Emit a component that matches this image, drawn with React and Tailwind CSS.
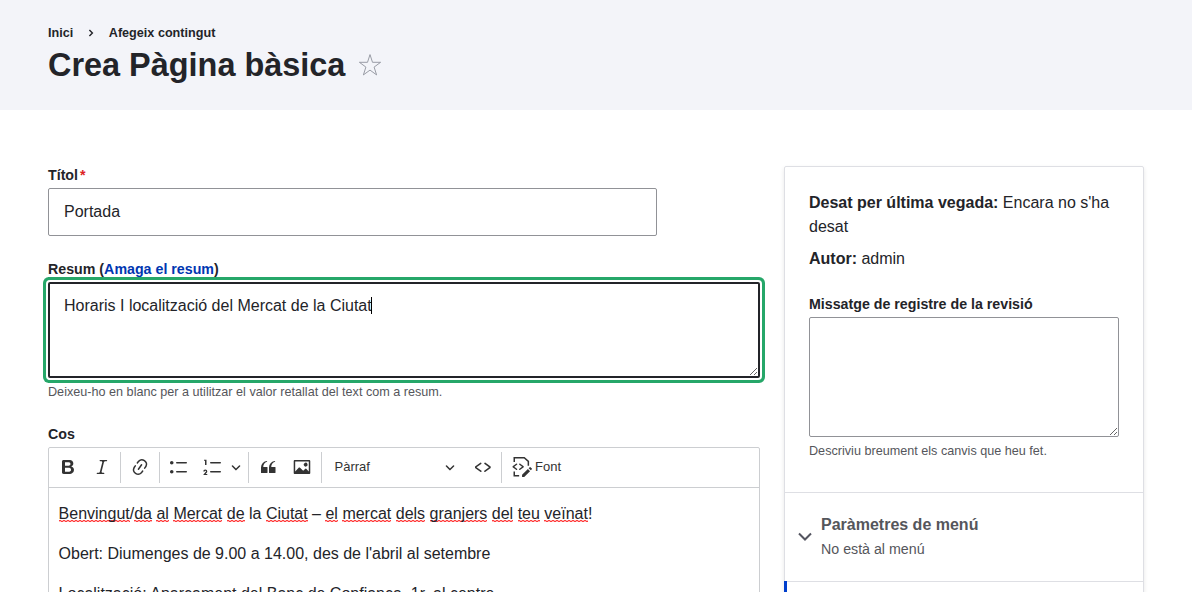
import React from "react";

const ICONS = {
  bold: "M10.187 17H5.773c-.637 0-1.092-.138-1.364-.415-.273-.277-.409-.718-.409-1.323V4.738c0-.617.14-1.062.419-1.332.279-.27.73-.406 1.354-.406h4.68c.69 0 1.288.041 1.793.124.506.083.96.242 1.36.477.341.197.644.447.906.75a3.262 3.262 0 0 1 .808 2.162c0 1.401-.722 2.426-2.167 3.075C15.05 10.175 16 11.315 16 13.01a3.756 3.756 0 0 1-2.296 3.504 6.1 6.1 0 0 1-1.517.377c-.571.073-1.238.11-2 .11zm-.217-6.217H7v4.087h3.069c1.977 0 2.965-.69 2.965-2.072 0-.707-.256-1.22-.768-1.537-.512-.319-1.277-.478-2.296-.478zM7 5.13v3.619h2.606c.729 0 1.292-.067 1.69-.2a1.6 1.6 0 0 0 .91-.765c.165-.267.247-.566.247-.897 0-.707-.26-1.176-.778-1.409-.519-.232-1.31-.348-2.375-.348H7z",
  italic: "m9.586 14.633.021.004c-.036.335.095.655.393.962.082.083.173.15.274.201h1.474a.6.6 0 1 1 0 1.2H5.304a.6.6 0 0 1 0-1.2h1.15c.474-.07.809-.182 1.005-.334.157-.122.291-.32.404-.597l2.416-9.55a1.053 1.053 0 0 0-.281-.823 1.12 1.12 0 0 0-.442-.296H8.15a.6.6 0 0 1 0-1.2h6.443a.6.6 0 1 1 0 1.2h-1.195c-.376.056-.65.155-.823.296-.215.175-.423.439-.623.79l-2.366 9.347z",
  link: "m11.077 15 .991-1.416a.75.75 0 1 1 1.229.86l-1.148 1.64a.748.748 0 0 1-.217.206 5.251 5.251 0 0 1-8.503-5.955.741.741 0 0 1 .12-.274l1.147-1.639a.75.75 0 1 1 1.228.86L4.933 10.7l.006.003a3.75 3.75 0 0 0 6.132 4.294l.006.004zm5.494-5.335a.748.748 0 0 1-.12.274l-1.147 1.639a.75.75 0 1 1-1.228-.86l.86-1.23a3.75 3.75 0 0 0-6.144-4.301l-.86 1.229a.75.75 0 0 1-1.229-.86l1.148-1.64a.748.748 0 0 1 .217-.206 5.251 5.251 0 0 1 8.503 5.955zm-4.563-2.532a.75.75 0 0 1 .184 1.045l-3.155 4.505a.75.75 0 1 1-1.229-.86l3.155-4.506a.75.75 0 0 1 1.045-.184z",
  bulleted: "M7 5.75c0 .414.336.75.75.75h9.5a.75.75 0 1 0 0-1.5h-9.5a.75.75 0 0 0-.75.75zm-6 0C1 4.784 1.777 4 2.75 4c.966 0 1.75.777 1.75 1.75 0 .966-.777 1.75-1.75 1.75C1.784 7.5 1 6.723 1 5.75zm6 9c0 .414.336.75.75.75h9.5a.75.75 0 1 0 0-1.5h-9.5a.75.75 0 0 0-.75.75zm-6 0c0-.966.777-1.75 1.75-1.75.966 0 1.75.777 1.75 1.75 0 .966-.777 1.75-1.75 1.75-.966 0-1.75-.777-1.75-1.75z",
  numbered: "M7 5.75c0 .414.336.75.75.75h9.5a.75.75 0 1 0 0-1.5h-9.5a.75.75 0 0 0-.75.75zM3.5 3v5H2V3.7H1v-1h2.5V3zM.343 17.857l2.59-3.257H2.92a.6.6 0 1 0-1.04 0H.302a2 2 0 1 1 3.995 0h-.001c-.048.405-.16.734-.333.988-.175.254-.59.692-1.244 1.312H4.3v1h-4l.043-.043zM7 14.75a.75.75 0 0 1 .75-.75h9.5a.75.75 0 1 1 0 1.5h-9.5a.75.75 0 0 1-.75-.75z",
  quote: "M3 10.423a6.5 6.5 0 0 1 6.056-6.408l.038.67C6.448 5.423 5.354 7.663 5.22 10H9c.552 0 .5.432.5.986v4.511c0 .554-.448.503-1 .503h-5c-.552 0-.5-.449-.5-1.003v-4.574zm8 0a6.5 6.5 0 0 1 6.056-6.408l.038.67c-2.646.739-3.74 2.979-3.873 5.315H17c.552 0 .5.432.5.986v4.511c0 .554-.448.503-1 .503h-5c-.552 0-.5-.449-.5-1.003v-4.574z",
  image: "M6.91 10.54c.26-.23.64-.21.88.03l3.36 3.14 2.23-2.06a.64.64 0 0 1 .87 0l2.52 2.97V4.5H3.2v10.12l3.71-4.08zm10.27-7.51c.6 0 1.09.47 1.09 1.05v11.84c0 .59-.49 1.06-1.09 1.06H2.79c-.6 0-1.09-.47-1.09-1.06V4.08c0-.58.49-1.05 1.1-1.05h14.38zm-5.22 5.56a1.96 1.96 0 1 1 3.4-1.96 1.96 1.96 0 0 1-3.4 1.96z",
  code: "m12.5 5.7 5.2 3.9v1.3l-5.6 4c-.1.2-.3.2-.5.2-.3-.1-.6-.7-.6-1l.3-.4 4.7-3.5L11.5 7l-.2-.2c-.1-.3-.1-.6 0-.8.2-.2.5-.4.8-.4a.8.8 0 0 1 .4.1zm-5.2 0L2 9.6v1.3l5.6 4c.1.2.3.2.5.2.3-.1.7-.7.6-1 0-.1 0-.3-.2-.4l-5-3.5L8.2 7l.2-.2c.1-.3.1-.6 0-.8-.2-.2-.5-.4-.8-.4a.8.8 0 0 0-.3.1z",
  source: "M4.06 6.64a.75.75 0 0 1 .958 1.15l-.085.07L2.29 9.75l2.646 1.89c.302.216.4.62.232.951l-.058.095a.75.75 0 0 1-.951.232l-.095-.058-3.5-2.5V9.14l3.496-2.5zm4.194 6.22a.75.75 0 0 1-.958-1.149l.085-.07 2.643-1.89-2.646-1.89a.75.75 0 0 1-.232-.952l.058-.095a.75.75 0 0 1 .95-.232l.096.058 3.5 2.5v1.22l-3.496 2.5zm7.644-.836 2.122 2.122-5.825 5.809-2.125-.005.003-2.116zm2.539-1.847 1.414 1.414a.5.5 0 0 1 0 .707l-1.06 1.06-2.122-2.12 1.061-1.061a.5.5 0 0 1 .707 0z",
};

function Icon({ name, className = "", children }) {
  return (
    <svg viewBox="0 0 20 20" className={`size-5 shrink-0 fill-[#333] ${className}`}>
      <path d={ICONS[name]} />
      {children}
    </svg>
  );
}

function Arrow({ className = "" }) {
  return (
    <svg viewBox="0 0 10 10" className={`size-2.5 shrink-0 fill-[#333] ${className}`}>
      <path d="M.941 4.523a.75.75 0 1 1 1.06-1.06l3.006 3.005 3.005-3.005a.75.75 0 1 1 1.06 1.06l-3.549 3.55a.75.75 0 0 1-1.168-.136L.941 4.523z" />
    </svg>
  );
}

function Separator({ className = "" }) {
  return <span className={`h-[31px] w-px shrink-0 bg-[#ccced1] ${className}`} />;
}

function Misspelt({ children }) {
  return (
    <span className="bg-[linear-gradient(90deg,#ff3b3b_50%,#ffb3b3_50%),linear-gradient(90deg,#ffb3b3_50%,#ff3b3b_50%)] bg-[length:4px_1px] bg-[position:0_15px,0_16px] bg-repeat-x">
      {children}
    </span>
  );
}

function Header() {
  return (
    <header className="h-[110px] bg-[#f3f4f9] px-12 pt-6">
      <nav className="flex h-[18px] items-center text-[12.64px] font-bold leading-[18px]">
        <span>Inici</span>
        <svg viewBox="0 0 8 8" className="ml-[14px] mr-[13.5px] size-2 fill-none stroke-[#232429]" strokeWidth="1.4">
          <path d="M2.4 1 5.4 4 2.4 7" />
        </svg>
        <span>Afegeix contingut</span>
      </nav>
      <div className="flex items-center">
        <h1 className="pt-px text-[32.43px] font-bold leading-[45px]">Crea Pàgina bàsica</h1>
        <svg viewBox="0 0 24 24" className="ml-[13px] size-6 fill-none stroke-[#8e929c]" strokeWidth="0.9">
          <path d="M12 1.6 14.5 9.3H22.6L16.1 14.1 18.6 21.9 12 17.1 5.4 21.9 7.9 14.1 1.4 9.3H9.5Z" />
        </svg>
      </div>
    </header>
  );
}

function Toolbar() {
  return (
    <div className="flex h-10 items-center border-b border-[#ccced1] pb-px pl-[9px] text-[13px] text-[#333]">
      <Icon name="bold" />
      <Icon name="italic" className="ml-3.5" />
      <Separator className="ml-2" />
      <Icon name="link" className="ml-[9px]" />
      <Separator className="ml-[9px]" />
      <Icon name="bulleted" className="ml-[9px]" />
      <Icon name="numbered" className="ml-3.5" />
      <Arrow className="ml-2" />
      <Separator className="ml-[7px]" />
      <Icon name="quote" className="ml-[9px]" />
      <Icon name="image" className="ml-3.5" />
      <Separator className="ml-[9px]" />
      <span className="ml-[12.5px] w-[110.5px] pb-px">Pàrraf</span>
      <Arrow />
      <Icon name="code" className="ml-[18px]" />
      <Separator className="ml-2" />
      <Icon name="source" className="ml-2.5">
        <path d="M2.25 4.9V.75h10l4.1 3.6v4.4M2.25 14.6v4.1h4.9" className="fill-none stroke-[#333]" strokeWidth="1.5" />
      </Icon>
      <span className="ml-[3px] pb-px">Font</span>
    </div>
  );
}

function Editor() {
  return (
    <div className="h-[240px] rounded-t-[2px] border border-[#ccced1]">
      <Toolbar />
      <div className="flex flex-col gap-4 px-[9.6px] pt-[13.5px] leading-6">
        <p>
          <Misspelt>Benvingut</Misspelt>/<Misspelt>da</Misspelt> <Misspelt>al</Misspelt> <Misspelt>Mercat</Misspelt>{" "}
          <Misspelt>de</Misspelt> la <Misspelt>Ciutat</Misspelt> – <Misspelt>el</Misspelt> <Misspelt>mercat</Misspelt>{" "}
          <Misspelt>dels</Misspelt> <Misspelt>granjers</Misspelt> <Misspelt>del</Misspelt> <Misspelt>teu</Misspelt>{" "}
          <Misspelt>veïnat</Misspelt>!
        </p>
        <p>Obert: Diumenges de 9.00 a 14.00, des de l'abril al setembre</p>
        <p>Localització: Aparcament del Banc de Confiança, 1r, al centre</p>
      </div>
    </div>
  );
}

function MainForm() {
  return (
    <main className="w-[712px]">
      <div className="text-[14.22px] font-bold leading-[18px]">
        Títol<span className="ml-[2px] text-[#dc2323]">*</span>
      </div>
      <input
        readOnly
        defaultValue="Portada"
        className="mt-1 block h-12 w-[609px] rounded-[2px] border border-[#919297] bg-white px-[15px] outline-none"
      />
      <div className="mt-6 text-[14.22px] font-bold leading-[18px]">
        Resum (<a className="text-[#0036b1]">Amaga el resum</a>)
      </div>
      <div className="relative mt-1">
        <textarea
          readOnly
          defaultValue="Horaris I localització del Mercat de la Ciutat"
          className="block h-24 w-full resize-y rounded-[2px] border-2 border-[#232429] bg-white px-[14px] py-[9.5px] leading-6 shadow-[0_0_0_2px_#fff,0_0_0_5px_#26a769] outline-none"
        />
        <span className="absolute left-[323px] top-[15px] h-[17px] w-px bg-black" />
      </div>
      <p className="mt-[5px] text-[12.64px] leading-[18px] text-[#55565b]">
        Deixeu-ho en blanc per a utilitzar el valor retallat del text com a resum.
      </p>
      <div className="mb-1 mt-6 text-[14.22px] font-bold leading-[18px]">Cos</div>
      <Editor />
    </main>
  );
}

function Sidebar() {
  return (
    <aside className="h-[500px] w-[360px] rounded-[2px] border border-[#dedfe4] shadow-[0_2px_4px_rgba(0,0,0,0.1)]">
      <div className="h-[325px] px-6 pt-6">
        <p className="leading-6">
          <b>Desat per última vegada:</b> Encara no s'ha desat
        </p>
        <p className="mt-2 leading-6">
          <b>Autor:</b> admin
        </p>
        <div className="mt-6 text-[14.22px] font-bold leading-[18px]">Missatge de registre de la revisió</div>
        <textarea readOnly className="mt-1 block h-[120px] w-full resize-y rounded-[2px] border border-[#919297] bg-white outline-none" />
        <p className="mt-[5px] text-[12.64px] leading-[18px] text-[#55565b]">Descriviu breument els canvis que heu fet.</p>
      </div>
      <div className="flex h-[90px] items-center border-y border-[#dedfe4] pl-3">
        <svg viewBox="0 0 16 16" className="size-4 fill-none stroke-[#545560]" strokeWidth="2">
          <path d="M2 4.5 8 10.5 14 4.5" />
        </svg>
        <div className="ml-2 text-[#55565b]">
          <div className="font-bold leading-6">Paràmetres de menú</div>
          <div className="text-[14.22px] leading-6">No està al menú</div>
        </div>
      </div>
      <div className="-ml-px -mt-px h-20 border-l-[3px] border-[#003ecc]" />
    </aside>
  );
}

export default function App() {
  return (
    <div className="h-[592px] overflow-hidden bg-white font-['Liberation_Sans',sans-serif] text-base text-[#232429]">
      <Header />
      <div className="flex gap-6 px-12 pt-14">
        <MainForm />
        <Sidebar />
      </div>
    </div>
  );
}
